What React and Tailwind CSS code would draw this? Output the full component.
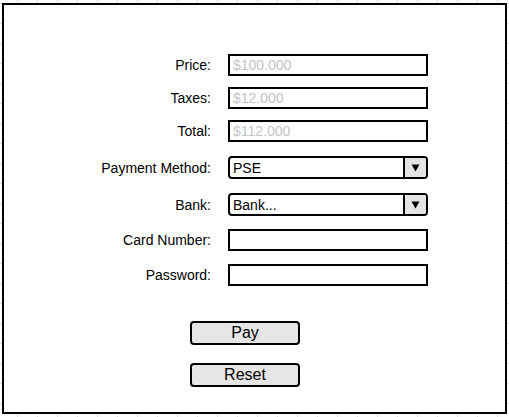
import React from "react";

const font = "font-['Liberation_Sans',Arial,sans-serif]";

function Label({ children }) {
  return (
    <div className="w-[207px] text-right text-[14px] leading-[16px] text-black pr-0">
      {children}
    </div>
  );
}

function TextBox({ value }) {
  return (
    <div className="ml-[17px] w-[200px] h-[22px] border-2 border-black bg-white flex items-center pl-[3px] text-[14px] text-[#c2c4c8] leading-[16px]">
      {value}
    </div>
  );
}

function SelectBox({ value }) {
  return (
    <div className="ml-[17px] w-[200px] h-[23px] border-2 border-black rounded-[4px] bg-white flex items-stretch overflow-hidden">
      <div className="flex-1 flex items-center pl-[3px] text-[14px] leading-[16px] text-black">
        {value}
      </div>
      <div className="w-[23px] border-l-2 border-black bg-[#e4e4e4] flex items-center justify-center">
        <svg width="9" height="8" viewBox="0 0 9 8">
          <polygon points="0.5,0.5 8.5,0.5 4.5,7.5" fill="#000" />
        </svg>
      </div>
    </div>
  );
}

function Row({ label, children, className = "" }) {
  return (
    <div className={`flex items-center ${className}`}>
      <Label>{label}</Label>
      {children}
    </div>
  );
}

function Button({ children, className = "" }) {
  return (
    <div
      className={`ml-[186px] w-[110px] h-[24px] border-2 border-black rounded-[4px] bg-[#e6e6e6] flex items-center justify-center text-[16px] leading-[18px] text-black ${className}`}
    >
      {children}
    </div>
  );
}

export default function App() {
  return (
    <div
      className={`${font} w-[509px] h-[417px] overflow-hidden bg-white bg-[linear-gradient(to_right,#dedede_1px,transparent_1px),linear-gradient(to_bottom,#dedede_1px,transparent_1px)] bg-[size:20px_20px] bg-[position:17px_3px] pt-[3px] pl-[2px]`}
    >
      <div className="w-[505px] h-[411px] border-2 border-black bg-white pt-[49px] flex flex-col">
        <Row label="Price:">
          <TextBox value="$100.000" />
        </Row>
        <Row label="Taxes:" className="mt-[11px]">
          <TextBox value="$12.000" />
        </Row>
        <Row label="Total:" className="mt-[11px]">
          <TextBox value="$112.000" />
        </Row>
        <Row label="Payment Method:" className="mt-[14px]">
          <SelectBox value="PSE" />
        </Row>
        <Row label="Bank:" className="mt-[14px]">
          <SelectBox value="Bank..." />
        </Row>
        <Row label="Card Number:" className="mt-[13px]">
          <TextBox value="" />
        </Row>
        <Row label="Password:" className="mt-[13px]">
          <TextBox value="" />
        </Row>
        <Button className="mt-[35px]">Pay</Button>
        <Button className="mt-[18px]">Reset</Button>
      </div>
    </div>
  );
}
